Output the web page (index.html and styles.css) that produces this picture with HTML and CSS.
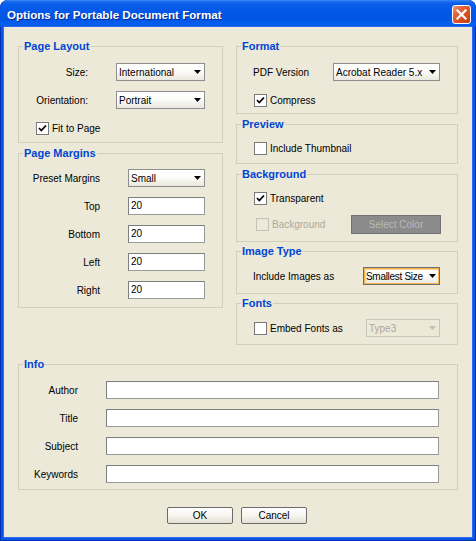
FILE: index.html
```html
<!DOCTYPE html>
<html>
<head>
<meta charset="utf-8">
<title>Options for Portable Document Format</title>
<link rel="stylesheet" href="styles.css">
</head>
<body>
<div class="window">
  <div class="titlebar">
    <span class="title">Options for Portable Document Format</span>
    <div class="close"><svg width="17" height="17" viewBox="0 0 17 17"><path d="M4.5 4.5L12.5 12.5M12.5 4.5L4.5 12.5" stroke="#fff" stroke-width="2.2" stroke-linecap="square"/></svg></div>
  </div>
  <div class="content">
    <div class="columns">
      <div class="col col-left">
        <div class="group g-layout">
          <div class="legend"><span>Page Layout</span></div>
          <div class="grid form-layout">
            <span class="lbl">Size:</span>
            <div class="combo"><span>International</span><svg class="arrow" width="7" height="4" viewBox="0 0 7 4"><path d="M0 0H7L3.5 4Z"/></svg></div>
            <span class="lbl">Orientation:</span>
            <div class="combo"><span>Portrait</span><svg class="arrow" width="7" height="4" viewBox="0 0 7 4"><path d="M0 0H7L3.5 4Z"/></svg></div>
            <div class="check span2 fit"><span class="cb"><svg width="11" height="11" viewBox="0 0 11 11"><path d="M2 5L4.3 7.5L9 2.5" fill="none" stroke="#000" stroke-width="1.8"/></svg></span><span>Fit to Page</span></div>
          </div>
        </div>
        <div class="group g-margins">
          <div class="legend"><span>Page Margins</span></div>
          <div class="grid form-margins">
            <span class="lbl">Preset Margins</span>
            <div class="combo"><span>Small</span><svg class="arrow" width="7" height="4" viewBox="0 0 7 4"><path d="M0 0H7L3.5 4Z"/></svg></div>
            <span class="lbl">Top</span><div class="field">20</div>
            <span class="lbl">Bottom</span><div class="field">20</div>
            <span class="lbl">Left</span><div class="field">20</div>
            <span class="lbl">Right</span><div class="field">20</div>
          </div>
        </div>
      </div>
      <div class="col col-right">
        <div class="group g-format">
          <div class="legend"><span>Format</span></div>
          <div class="body body-format">
            <div class="row">
              <span>PDF Version</span>
              <div class="combo w-version"><span>Acrobat Reader 5.x</span><svg class="arrow" width="7" height="4" viewBox="0 0 7 4"><path d="M0 0H7L3.5 4Z"/></svg></div>
            </div>
            <div class="check shift1"><span class="cb"><svg width="11" height="11" viewBox="0 0 11 11"><path d="M2 5L4.3 7.5L9 2.5" fill="none" stroke="#000" stroke-width="1.8"/></svg></span><span>Compress</span></div>
          </div>
        </div>
        <div class="group g-preview">
          <div class="legend"><span>Preview</span></div>
          <div class="body body-preview">
            <div class="check"><span class="cb"></span><span>Include Thumbnail</span></div>
          </div>
        </div>
        <div class="group g-bg">
          <div class="legend"><span>Background</span></div>
          <div class="body body-bg">
            <div class="check"><span class="cb"><svg width="11" height="11" viewBox="0 0 11 11"><path d="M2 5L4.3 7.5L9 2.5" fill="none" stroke="#000" stroke-width="1.8"/></svg></span><span>Transparent</span></div>
            <div class="row row-tall">
              <div class="check disabled shift2"><span class="cb"></span><span>Background</span></div>
              <div class="btn-disabled">Select Color</div>
            </div>
          </div>
        </div>
        <div class="group g-img">
          <div class="legend"><span>Image Type</span></div>
          <div class="body body-img">
            <div class="row">
              <span>Include Images as</span>
              <div class="combo focus w-img"><span class="tight">Smallest Size</span><svg class="arrow" width="7" height="4" viewBox="0 0 7 4"><path d="M0 0H7L3.5 4Z"/></svg></div>
            </div>
          </div>
        </div>
        <div class="group g-fonts">
          <div class="legend"><span>Fonts</span></div>
          <div class="body body-fonts">
            <div class="row">
              <div class="check"><span class="cb"></span><span>Embed Fonts as</span></div>
              <div class="combo off w-type"><span>Type3</span><svg class="arrow" width="7" height="4" viewBox="0 0 7 4"><path d="M0 0H7L3.5 4Z"/></svg></div>
            </div>
          </div>
        </div>
      </div>
    </div>
    <div class="group g-info">
      <div class="legend"><span>Info</span></div>
      <div class="grid form-info">
        <span class="lbl">Author</span><div class="field"></div>
        <span class="lbl">Title</span><div class="field"></div>
        <span class="lbl">Subject</span><div class="field"></div>
        <span class="lbl">Keywords</span><div class="field"></div>
      </div>
    </div>
    <div class="buttons">
      <div class="btn">OK</div>
      <div class="btn">Cancel</div>
    </div>
  </div>
</div>
</body>
</html>
```

FILE: styles.css
```css
body {
  margin: 0;
  background: #ffffff;
  font-family: "Liberation Sans", Arial, sans-serif;
  font-size: 10px;
  color: #000;
}

.window {
  width: 476px;
  height: 541px;
  display: flex;
  flex-direction: column;
  background: #0b54e4;
  border-radius: 8px 8px 0 0;
  box-shadow: inset 1px 0 #0030b4, inset -1px 0 #0030b4, inset 0 -1px #0030b4;
  overflow: hidden;
}

.titlebar {
  height: 27px;
  flex: none;
  box-sizing: border-box;
  display: flex;
  justify-content: space-between;
  align-items: flex-start;
  padding: 5px 5px 0 7px;
  border-radius: 8px 8px 0 0;
  background: linear-gradient(to bottom, #3f8cf3 0%, #1a6cf0 6%, #0a5eec 14%, #0358e8 40%, #0055e5 70%, #0660ef 90%, #0650d8 100%);
}

.title {
  color: #fff;
  font-weight: bold;
  font-size: 11.6px;
  line-height: 19px;
  text-shadow: 1px 1px 0 #0b2a90;
}

.close {
  width: 19px;
  height: 19px;
  box-sizing: border-box;
  border: 1px solid #fff;
  border-radius: 3px;
  background: linear-gradient(135deg, #f29a76 0%, #e4643c 30%, #d64d1f 65%, #c13b10 100%);
  display: flex;
  align-items: center;
  justify-content: center;
}

.content {
  flex: 1;
  margin: 0 4px 4px;
  background: #ece9d8;
  display: flex;
  flex-direction: column;
  box-shadow: 0 0 0 1px #2a6af5;
}

.columns {
  display: flex;
  align-items: flex-start;
  gap: 13px;
  padding: 0 14px;
}

.col {
  display: flex;
  flex-direction: column;
}

.col-left { width: 205px; }
.col-right { width: 222px; }

.group {
  box-sizing: border-box;
  border: 1px solid #d0d0bf;
}

.legend {
  display: flex;
  margin: -8px 0 0 4px;
  height: 14px;
}

.legend span {
  padding: 0 1px;
  line-height: 14px;
  background: #ece9d8;
  color: #0046d5;
  font-weight: bold;
  font-size: 11px;
}

.g-layout { margin-top: 19px; }
.g-margins { margin-top: 10px; }
.g-format { margin-top: 19px; }
.g-preview, .g-bg { margin-top: 10px; }
.g-img, .g-fonts { margin-top: 9px; }
.g-info { margin: 19px 14px 0; }

.grid {
  display: grid;
  grid-auto-rows: 18px;
  column-gap: 28px;
  row-gap: 10px;
  align-items: center;
}

.form-layout { grid-template-columns: 69px 89px; padding: 10px 0 5px; }
.form-margins { grid-template-columns: 81px 77px; padding: 9px 0 8px; }
.form-info { grid-template-columns: 59px 333px; padding: 10px 0 6px; }

.lbl {
  text-align: right;
  white-space: nowrap;
}

.span2 { grid-column: 1 / 3; }
.fit { padding-left: 17px; }

.combo {
  box-sizing: border-box;
  height: 18px;
  display: flex;
  align-items: center;
  justify-content: space-between;
  padding: 0 3px 0 2px;
  border: 1px solid #8e8e8e;
  background: linear-gradient(to bottom, #ffffff 0%, #fcfcfa 45%, #e9e7dd 100%);
  white-space: nowrap;
}

.combo .arrow { flex: none; }
.combo .arrow path { fill: #000; }

.tight { letter-spacing: -0.3px; }

.combo.focus {
  border-color: #6f6f6f;
  box-shadow: inset 0 0 0 1px #f3b04b, inset 1px 1px 0 1px #fbd58e;
}

.combo.off {
  border-color: #c9c7ba;
  background: #ece9d8;
  color: #aca899;
}

.combo.off .arrow path { fill: #c2bfb2; }

.w-version { width: 107px; }
.w-img { width: 77px; }
.w-type { width: 74px; }

.field {
  box-sizing: border-box;
  height: 18px;
  border: 1px solid #9a9a9a;
  border-top-color: #7e7e7e;
  border-left-color: #7e7e7e;
  background: #fff;
  padding-left: 2px;
  line-height: 16px;
}

.check {
  display: flex;
  align-items: center;
  gap: 3px;
  height: 18px;
  white-space: nowrap;
}

.cb {
  box-sizing: border-box;
  width: 13px;
  height: 13px;
  border: 1px solid #7a7a7a;
  background: #fff;
  display: flex;
  align-items: center;
  justify-content: center;
}

.check.disabled { color: #aca899; }
.check.disabled .cb { border-color: #c4c2b4; background: #ece9d8; }

.shift1 { margin-left: 1px; }
.shift2 { margin-left: 2px; }

.body {
  display: flex;
  flex-direction: column;
}

.row {
  display: flex;
  align-items: center;
  justify-content: space-between;
  height: 18px;
  white-space: nowrap;
}

.row-tall { height: 19px; }

.body-format { padding: 10px 17px 4px 16px; gap: 10px; }
.body-preview { padding: 8px 0 6px 17px; }
.body-bg { padding: 8px 16px 7px 17px; gap: 8px; }
.body-img { padding: 9px 17px 8px 16px; }
.body-fonts { padding: 9px 17px 7px 17px; }

.btn-disabled {
  box-sizing: border-box;
  width: 90px;
  height: 19px;
  border: 1px solid #727272;
  background: #8b8b8b;
  color: #b9b9b9;
  text-align: center;
  line-height: 17px;
}

.buttons {
  display: flex;
  justify-content: center;
  gap: 8px;
  margin-top: 17px;
  padding-right: 2px;
}

.btn {
  box-sizing: border-box;
  width: 66px;
  height: 17px;
  border: 1px solid #6b6b6b;
  border-radius: 2px;
  background: linear-gradient(to bottom, #ffffff 0%, #f6f5ef 50%, #e3e0d2 100%);
  text-align: center;
  line-height: 15px;
}
```
